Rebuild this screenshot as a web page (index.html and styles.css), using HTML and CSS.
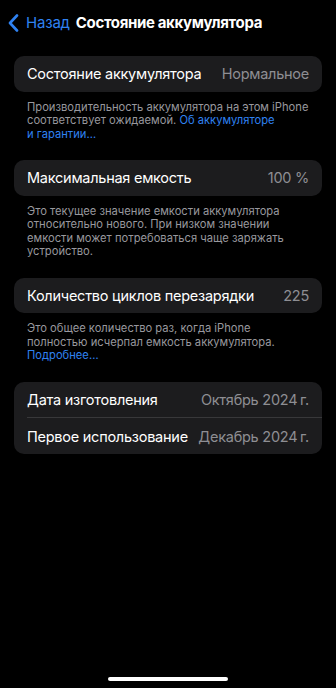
FILE: index.html
```html
<!DOCTYPE html>
<html lang="ru">
<head>
<meta charset="utf-8">
<link rel="stylesheet" href="styles.css">
</head>
<body>
<div class="screen">
  <header class="nav">
    <a class="back">
      <svg class="chev" width="11" height="18" viewBox="0 0 11 18"><path d="M9 1.5 L2 9 L9 16.5" fill="none" stroke="#2f82f2" stroke-width="2.6" stroke-linecap="round" stroke-linejoin="round"/></svg>
      <span>Назад</span>
    </a>
    <h1 class="title">Состояние аккумулятора</h1>
  </header>

  <section class="group">
    <div class="card">
      <div class="row"><span class="label">Состояние аккумулятора</span><span class="value">Нормальное</span></div>
    </div>
    <p class="foot">Производительность аккумулятора на этом iPhone соответствует ожидаемой. <span class="link">Об аккумуляторе и&nbsp;гарантии…</span></p>
  </section>

  <section class="group">
    <div class="card">
      <div class="row"><span class="label">Максимальная емкость</span><span class="value">100 %</span></div>
    </div>
    <p class="foot">Это текущее значение емкости аккумулятора относительно нового. При низком значении емкости может потребоваться чаще заряжать устройство.</p>
  </section>

  <section class="group">
    <div class="card">
      <div class="row"><span class="label">Количество циклов перезарядки</span><span class="value">225</span></div>
    </div>
    <p class="foot">Это общее количество раз, когда iPhone полностью исчерпал емкость аккумулятора. <span class="link">Подробнее…</span></p>
  </section>

  <section class="group">
    <div class="card">
      <div class="row"><span class="label">Дата изготовления</span><span class="value">Октябрь 2024&#8239;г.</span></div>
      <div class="row sep"><span class="label">Первое использование</span><span class="value">Декабрь 2024&#8239;г.</span></div>
    </div>
  </section>

  <div class="home"></div>
</div>
</body>
</html>
```
FILE: styles.css
```css
* { box-sizing: border-box; }
html, body { margin: 0; padding: 0; background: #000; }
body {
  font-family: Inter, "Noto Sans", "DejaVu Sans", sans-serif;
  color: #fff;
  width: 336px;
  height: 688px;
  overflow: hidden;
}
.screen {
  position: relative;
  height: 688px;
  display: flex;
  flex-direction: column;
  padding: 0 14px;
}
.nav {
  display: flex;
  align-items: center;
  height: 44px;
  margin: 0 -6px;
  gap: 6px;
}
.back {
  display: flex;
  align-items: center;
  gap: 7px;
  color: #2f82f2;
  font-size: 15px;
  letter-spacing: -0.2px;
}
.chev { display: block; margin-top: 1px; }
.title {
  margin: 0;
  font-size: 15px;
  font-weight: 700;
  letter-spacing: -0.35px;
}
.group { margin-top: 19px; }
.group:first-of-type { margin-top: 12px; }
.card {
  background: #1c1c1e;
  border-radius: 10px;
  padding-left: 13px;
}
.row {
  display: flex;
  justify-content: space-between;
  align-items: center;
  height: 35.5px;
  padding-right: 13px;
  font-size: 14.5px;
  letter-spacing: -0.25px;
}
.row.sep { border-top: 0.5px solid #38383a; height: 37px; }
.label { color: #fff; white-space: nowrap; }
.value { color: #8e8e93; white-space: nowrap; }
.foot {
  margin: 0;
  padding: 9px 13px 0 13px;
  font-size: 11.2px;
  line-height: 13.5px;
  color: #98989e;
  letter-spacing: 0;
}
.link { color: #2f82f2; }
.home {
  position: absolute;
  left: 108px;
  bottom: 7px;
  width: 120px;
  height: 4.5px;
  border-radius: 3px;
  background: #fff;
}
```
